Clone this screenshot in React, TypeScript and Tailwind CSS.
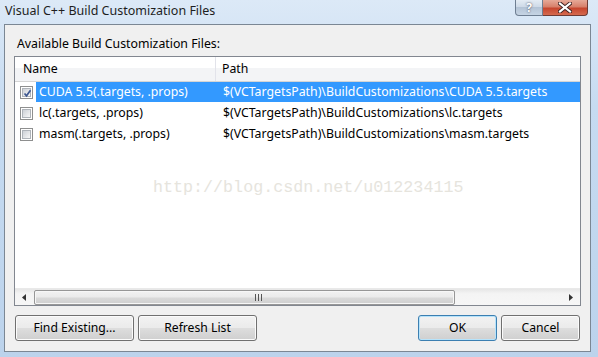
import React from 'react'

const rows = [
  { name: 'CUDA 5.5(.targets, .props)', path: '$(VCTargetsPath)\\BuildCustomizations\\CUDA 5.5.targets', checked: true, selected: true },
  { name: 'lc(.targets, .props)', path: '$(VCTargetsPath)\\BuildCustomizations\\lc.targets', checked: false, selected: false },
  { name: 'masm(.targets, .props)', path: '$(VCTargetsPath)\\BuildCustomizations\\masm.targets', checked: false, selected: false },
]

function Check(props: { checked: boolean }) {
  return (
    <div className="w-[13px] h-[13px] shrink-0 border border-[#8e8f8f] bg-white p-[1px]">
      <div className="relative w-full h-full border border-[#aeb3b9] bg-linear-to-br from-[#cdd1d7] to-[#f7f7f7]">
        {props.checked && (
          <svg className="absolute left-[0px] top-[0px]" width="9" height="9" viewBox="0 0 9 9">
            <path d="M1.5 4.5 L3.5 6.8 L7.5 1.2" fill="none" stroke="#3f5891" strokeWidth="1.7" />
          </svg>
        )}
      </div>
    </div>
  )
}

function Btn(props: { label: string; className: string; focus?: boolean }) {
  return (
    <div
      className={`${props.className} h-[26px] flex items-center justify-center rounded-[3px] border ${
        props.focus ? 'border-[#3c7fb1] shadow-[inset_0_0_0_1px_#b6e3fb]' : 'border-[#707070] shadow-[inset_0_0_0_1px_#fbfbfb]'
      } bg-[linear-gradient(#f2f2f2,#ebebeb_48%,#dddddd_52%,#cfcfcf)] text-[12.2px] text-black`}
    >
      {props.label}
    </div>
  )
}

export default function App() {
  return (
    <div
      className="relative w-[598px] h-[357px] overflow-hidden flex flex-col bg-[linear-gradient(to_bottom,#dce9f7,#c6dbf1_30%,#bcd3ec)]"
      style={{ fontFamily: '"Noto Sans", "Open Sans", sans-serif' }}
    >
      {/* title bar */}
      <div className="h-[24px] flex items-start shrink-0">
        <div className="pl-[5px] pt-[2px] text-[12.5px] leading-[18px] text-[#1e1e1e]">Visual C++ Build Customization Files</div>
        <div className="ml-auto mr-[10px] flex">
          <div className="w-[28px] h-[16px] rounded-bl-[4px] border border-t-0 border-[#6e7e92] bg-[linear-gradient(#e4ecf4,#ccd8e6_50%,#b4c4d6_50%,#c6d4e4)] flex items-center justify-center text-[12px] font-bold leading-none text-white [text-shadow:0_0_2px_#334]">
            ?
          </div>
          <div className="w-[45px] h-[16px] rounded-br-[4px] border border-t-0 border-l-0 border-[#6e3b35] bg-[linear-gradient(#e6a998,#d7806b_45%,#c6452e_55%,#d56a4f)] flex items-center justify-center">
            <svg width="14" height="11" viewBox="0 0 14 11">
              <path d="M2 1.5 L12 9.5 M12 1.5 L2 9.5" stroke="#3b2020" strokeWidth="4" strokeLinecap="square" />
              <path d="M2 1.5 L12 9.5 M12 1.5 L2 9.5" stroke="#ffffff" strokeWidth="2.2" strokeLinecap="square" />
            </svg>
          </div>
        </div>
      </div>

      {/* client */}
      <div className="ml-[4px] w-[587px] h-[328px] border border-[#7b8794] bg-[#f0f0f0] flex flex-col px-[9px]">
        <div className="pl-[3px] mt-[10px] h-[18px] text-[12.3px] leading-[18px] text-black">Available Build Customization Files:</div>
        <div className="mt-[3px] h-[250px] border border-[#828790] bg-white flex flex-col">
          {/* header */}
          <div className="h-[25px] flex border-b border-[#d5d5d5] bg-[linear-gradient(#ffffff_45%,#f3f4f6_45%)] text-[12.3px] text-black">
            <div className="w-[201px] pl-[8px] flex items-center border-r border-[#e2e3ea]">Name</div>
            <div className="pl-[6px] flex items-center">Path</div>
          </div>
          {/* rows */}
          <div className="flex-1 flex flex-col">
            {rows.map((r) => (
              <div key={r.name} className="h-[21px] flex items-start pl-[5px] text-[12.3px] text-black">
                <div className="h-[20px] flex items-center">
                  <Check checked={r.checked} />
                </div>
                <div className={`ml-[3px] flex-1 h-[20px] flex items-center ${r.selected ? 'bg-[#3399ff] text-white' : ''}`}>
                  <div className="w-[187px] pl-[3px] whitespace-nowrap">{r.name}</div>
                  <div className="whitespace-nowrap">{r.path}</div>
                </div>
              </div>
            ))}
          </div>
          {/* horizontal scrollbar */}
          <div className="h-[17px] flex items-center bg-[linear-gradient(#e6e6e6,#f4f4f4_30%,#f6f6f6)] border-t border-[#e9e9e9]">
            <div className="w-[18px] flex justify-center">
              <svg width="4" height="7" viewBox="0 0 4 7">
                <path d="M4 0 L0 3.5 L4 7 Z" fill="#333" />
              </svg>
            </div>
            <div className="ml-[1px] w-[421px] h-[15px] rounded-[2px] border border-[#979797] bg-[linear-gradient(to_bottom,#f2f2f2,#ebebeb_45%,#d9d9d9_55%,#cfcfcf)] shadow-[inset_0_0_0_1px_#f7f7f7] flex items-center justify-center">
              <div className="flex gap-[2px] ml-[28px]">
                <div className="w-[1px] h-[7px] bg-[#555]" />
                <div className="w-[1px] h-[7px] bg-[#555]" />
                <div className="w-[1px] h-[7px] bg-[#555]" />
              </div>
            </div>
            <div className="ml-auto w-[18px] flex justify-center">
              <svg width="4" height="7" viewBox="0 0 4 7">
                <path d="M0 0 L4 3.5 L0 7 Z" fill="#333" />
              </svg>
            </div>
          </div>
        </div>
        {/* buttons */}
        <div className="mt-[9px] flex pl-[1px]">
          <Btn label="Find Existing..." className="w-[119px]" />
          <Btn label="Refresh List" className="ml-[4px] w-[119px]" />
          <Btn label="OK" className="ml-auto w-[79px]" focus />
          <Btn label="Cancel" className="ml-[4px] w-[79px] mr-[1px]" />
        </div>
      </div>

      {/* watermark */}
      <div
        className="absolute left-[153px] top-[178px] text-[16.7px] leading-[20px] text-[#e6e4dd] whitespace-nowrap"
        style={{ fontFamily: '"Liberation Mono", monospace' }}
      >
        http://blog.csdn.net/u012234115
      </div>
    </div>
  )
}
